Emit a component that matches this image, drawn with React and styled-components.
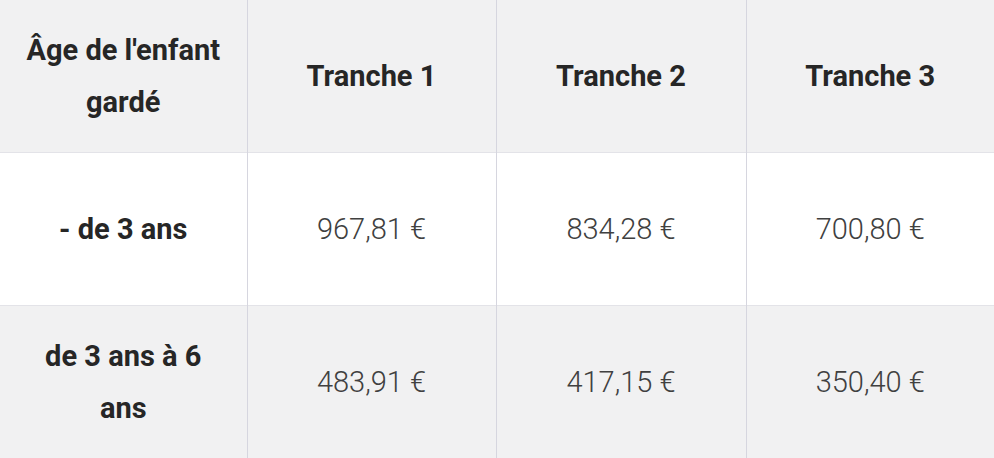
import React from 'react'
import styled, { createGlobalStyle } from 'styled-components'

const GlobalStyle = createGlobalStyle`
body {
  margin: 0;
  background: #ffffff;
  font-family: Roboto, "Liberation Sans", sans-serif;
}
`

const Table = styled.table`
width: 994px;
border-collapse: collapse;
table-layout: fixed;
`

const Row = styled.tr`
height: 153px;
background: ${(p) => (p.$shaded ? '#f1f1f2' : '#ffffff')};
border-bottom: 1px solid #e3e3e8;
&:first-child {
  height: 152px;
}
&:last-child {
  border-bottom: none;
}
`

const Cell = styled.td`
padding: 0 22px;
text-align: center;
vertical-align: middle;
font-size: 29px;
line-height: 52px;
color: ${(p) => (p.$bold ? '#262626' : '#404040')};
font-weight: ${(p) => (p.$bold ? 700 : 300)};
border-right: 1px solid #d6d6df;
&:last-child {
  border-right: none;
}
`

const rows = [
    { label: '- de 3 ans', values: ['967,81 €', '834,28 €', '700,80 €'] },
    { label: 'de 3 ans à 6 ans', values: ['483,91 €', '417,15 €', '350,40 €'] },
]

export default function App() {
    return (
        <>
            <GlobalStyle />
            <Table>
                <colgroup>
                    <col style={{ width: 247 }} />
                    <col style={{ width: 249 }} />
                    <col style={{ width: 250 }} />
                    <col style={{ width: 248 }} />
                </colgroup>
                <tbody>
                    <Row $shaded>
                        <Cell $bold>Âge de l'enfant gardé</Cell>
                        <Cell $bold>Tranche 1</Cell>
                        <Cell $bold>Tranche 2</Cell>
                        <Cell $bold>Tranche 3</Cell>
                    </Row>
                    {rows.map((r, i) => (
                        <Row key={r.label} $shaded={i % 2 === 1}>
                            <Cell $bold>{r.label}</Cell>
                            {r.values.map((v) => (
                                <Cell key={v}>{v}</Cell>
                            ))}
                        </Row>
                    ))}
                </tbody>
            </Table>
        </>
    )
}
